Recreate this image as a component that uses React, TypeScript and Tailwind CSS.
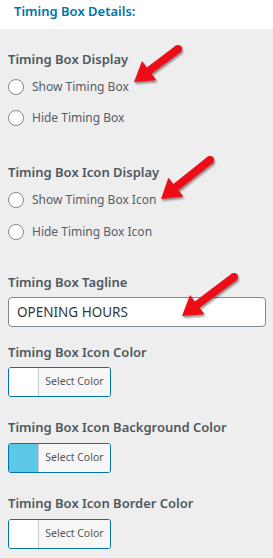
type Pt = [number, number]

function arrowPoints(tail: Pt, tip: Pt, shaft: number, headW: number, headL: number) {
  const dx = tip[0] - tail[0]
  const dy = tip[1] - tail[1]
  const len = Math.hypot(dx, dy)
  const ux = dx / len
  const uy = dy / len
  const nx = -uy
  const ny = ux
  const bx = tip[0] - ux * headL
  const by = tip[1] - uy * headL
  const pts: Pt[] = [
    [tail[0] + nx * shaft / 2, tail[1] + ny * shaft / 2],
    [bx + nx * shaft / 2, by + ny * shaft / 2],
    [bx + nx * headW / 2, by + ny * headW / 2],
    tip,
    [bx - nx * headW / 2, by - ny * headW / 2],
    [bx - nx * shaft / 2, by - ny * shaft / 2],
    [tail[0] - nx * shaft / 2, tail[1] - ny * shaft / 2],
  ]
  return pts.map((p) => p.join(",")).join(" ")
}

function Arrow({ tail, tip }: { tail: Pt; tip: Pt }) {
  return (
    <g filter="url(#shadow)">
      <polygon points={arrowPoints(tail, tip, 8, 24, 19)} fill="#ec1018" />
      <circle cx={tail[0]} cy={tail[1]} r={4} fill="#ec1018" />
    </g>
  )
}

function Label({ children, className = "" }: { children: React.ReactNode; className?: string }) {
  return (
    <div className={`h-[20px] leading-[20px] text-[13px] font-semibold text-[#50575e] ${className}`}>{children}</div>
  )
}

function Radio({ label, className = "" }: { label: string; className?: string }) {
  return (
    <div className={`flex h-[24px] items-center gap-2 ${className}`}>
      <span className="h-4 w-4 rounded-full border border-[#7e8993] bg-white" />
      <span className="text-[12px] text-[#555d66]">{label}</span>
    </div>
  )
}

function ColorButton({ swatch, className = "" }: { swatch: string; className?: string }) {
  return (
    <div className={`flex h-[30px] w-[103px] overflow-hidden rounded-[3px] border border-[#0073aa] ${className}`}>
      <div className="w-[30px] border-r border-[#cccccc]" style={{ backgroundColor: swatch }} />
      <div className="flex flex-1 items-center justify-center bg-[#f7f7f7] text-[10.5px] text-[#555555]">Select Color</div>
    </div>
  )
}

export default function App() {
  return (
    <div className="relative h-[558px] w-[273px] overflow-hidden bg-[#eeeeee] font-['Noto_Sans',sans-serif]">
      <div className="h-[29px] bg-white pl-[14px] pt-[1px] text-[13px] font-semibold leading-[20px] text-[#0073aa]">
        Timing Box Details:
      </div>
      <div className="flex flex-col px-2 pt-[20px]">
        <Label>Timing Box Display</Label>
        <Radio label="Show Timing Box" className="mt-[6px]" />
        <Radio label="Hide Timing Box" className="mt-[7px]" />

        <Label className="mt-[32px]">Timing Box Icon Display</Label>
        <Radio label="Show Timing Box Icon" className="mt-[6px]" />
        <Radio label="Hide Timing Box Icon" className="mt-[8px]" />

        <Label className="mt-[28px]">Timing Box Tagline</Label>
        <div className="mt-[5px] flex h-[30px] w-[258px] items-center rounded-[4px] border border-[#7e8993] bg-white pl-2 text-[13.5px] text-[#32373c]">
          OPENING HOURS
        </div>

        <Label className="mt-[15px]">Timing Box Icon Color</Label>
        <ColorButton swatch="#ffffff" className="mt-[5px]" />

        <Label className="mt-[20px]">Timing Box Icon Background Color</Label>
        <ColorButton swatch="#5bc8e6" className="mt-[6px]" />

        <Label className="mt-[20px]">Timing Box Icon Border Color</Label>
        <ColorButton swatch="#ffffff" className="mt-[6px]" />
      </div>

      <svg className="pointer-events-none absolute left-0 top-0" width="273" height="558">
        <defs>
          <filter id="shadow" x="-20%" y="-20%" width="140%" height="140%">
            <feDropShadow dx="1" dy="2" stdDeviation="1.2" floodColor="#000" floodOpacity="0.45" />
          </filter>
        </defs>
        <Arrow tail={[178, 49]} tip={[134, 82]} />
        <Arrow tail={[210, 160]} tip={[161, 199]} />
        <Arrow tail={[234, 277]} tip={[182, 316]} />
      </svg>
    </div>
  )
}
